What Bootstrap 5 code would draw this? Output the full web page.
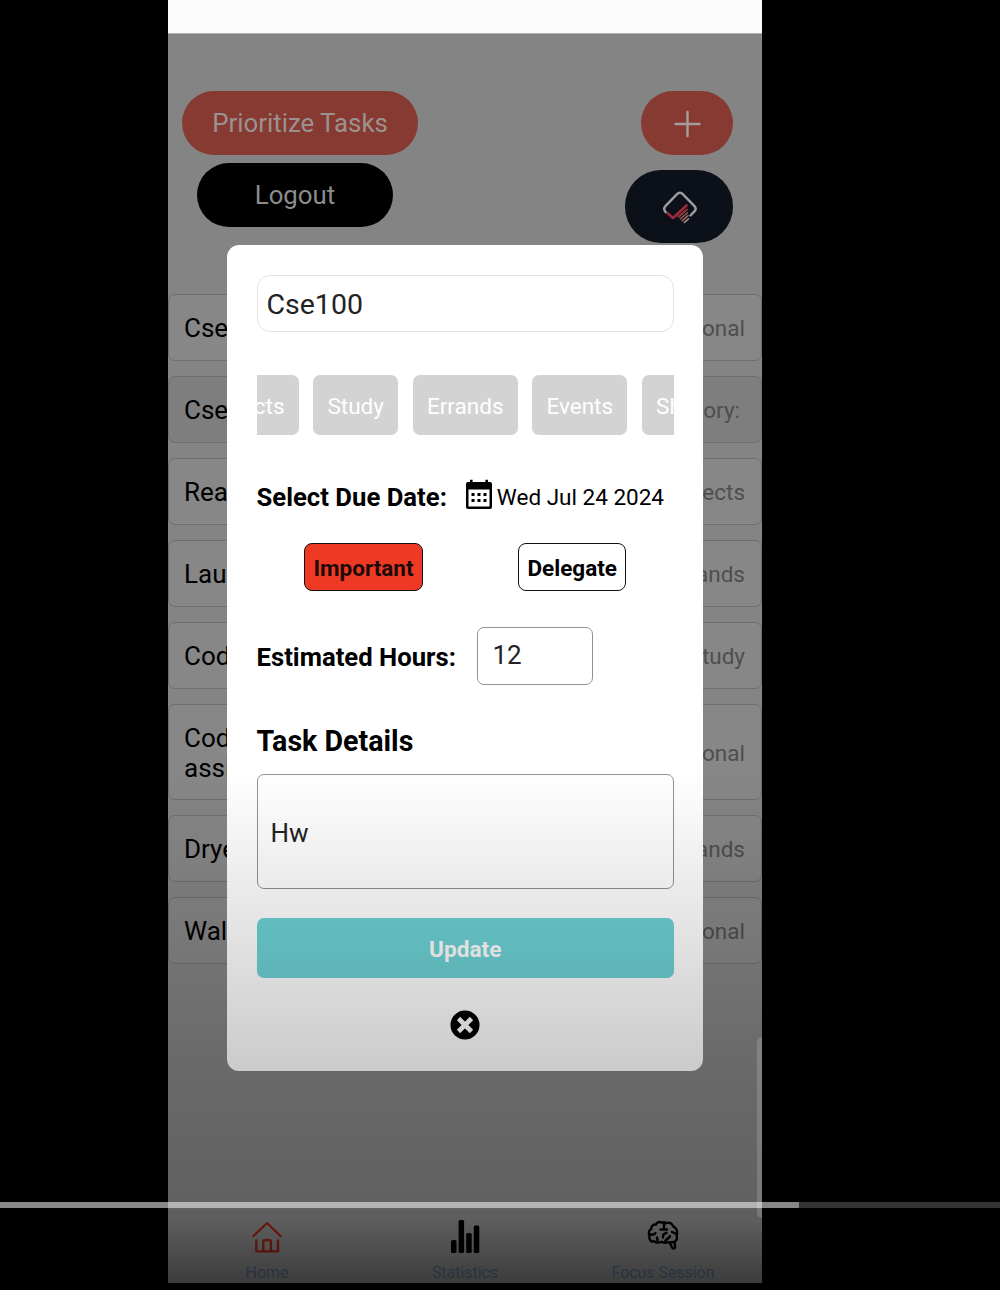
<!DOCTYPE html>
<html lang="en">
<head>
<meta charset="utf-8">
<meta name="viewport" content="width=device-width, initial-scale=1">
<title>Tasks</title>
<link rel="stylesheet" href="https://cdn.jsdelivr.net/npm/bootstrap@5.3.0/dist/css/bootstrap.min.css">
<style>
body{background:#000;font-family:Roboto,"Liberation Sans",sans-serif;color:#000;height:1290px;overflow:hidden}
.phone{width:594px;height:1283px;margin-left:168px;background:#848484;overflow:hidden}
.statusbar{height:34px;background:#fcfcfc;border-bottom:1px solid #b4b4b4}
.topbar{height:260px;padding:57px 29px 0 14px}
.pill{border-radius:36px;border:0;padding:2px 0 0;color:#9a9290;font-size:25.8px;line-height:1;height:64px;display:flex;align-items:center;justify-content:center}
.pill-red{background:#873a32}
.pill-prio{width:236px}
.pill-out{width:196px;background:#000;color:#8c8c8c;margin:8px 0 0 15px}
.pill-plus{width:92px}
.pill-logo{width:108px;height:73px;background:#0c1019;margin-top:15px}
.task{min-height:67px;border:1.5px solid #6e6e6e;border-radius:7px;background:#878787;padding:2px 16px 0 15px;margin-bottom:15px;font-size:26px;line-height:30.5px}
.task-alt{background:#7e7e7e}
.task-tall{min-height:96px}
.task .kind{font-size:22.5px;color:#4e4e4e}
.task .kind-wide{padding-right:5px}
.tabs{height:71px;background:#828282;border-top:1px solid #7a7a7a}
.tabs .tab{width:198px;font-size:15.9px;line-height:18px;color:#53647f;padding-top:6px}
.tabs svg{margin-bottom:9px}
.dialog-box{left:227px;top:245px;width:476px;height:826px;border-radius:12px;background:#fff;padding:30px 29px 0 29.5px;z-index:2}
.title-field{height:57px;border:1.5px solid #e2e2e2;border-radius:13px;font-size:28.5px;padding:3px 9px 0;color:#222}
.chips{height:60px;margin-top:43px;gap:14.4px}
.chip{background:#d3d3d3;color:#fff;border-radius:7px;font-size:22.5px;height:60px;padding:3px 14.3px 0}
.chip:first-child{margin-left:-68.8px}
.lbl{font-size:25.7px;font-weight:700;padding-top:2px}
.date-row{height:32px;margin-top:44px;font-size:22.5px}
.date-row .lbl{padding-top:4px}
.date-row .day{margin:0 10px 0 4px;padding-top:6px}
.flags{height:84px;margin-top:32px}
.flag{height:48px;border:1.5px solid #111;border-radius:8px;font-size:22.5px;font-weight:700;padding:3px 8px 0}
.flag-on{background:#ee3a25;color:#1d0a08}
.hours{width:116px;height:58px;border:1.5px solid #929292;border-radius:7px;font-size:26px;padding-left:14px;color:#222;margin-left:21.5px;padding-bottom:2px}
.details-title{font-size:28.6px;font-weight:700;line-height:34px;margin:39px 0 16px}
.details{height:115px;border:1.5px solid #929292;border-radius:7px;font-size:26px;padding:3px 0 0 13px;color:#222}
.update{height:60px;margin-top:29px;background:#6dd2d5;border-radius:7px;color:#fff;font-size:22.6px;font-weight:700;padding-top:3px}
.shade{left:168px;top:770px;width:594px;height:513px;z-index:3;pointer-events:none;background:linear-gradient(rgba(0,0,0,0),rgba(0,0,0,.08) 115px,rgba(0,0,0,.14) 208px,rgba(0,0,0,.205) 300px,rgba(0,0,0,.265) 430px,rgba(0,0,0,.28) 450px,rgba(0,0,0,.54) 513px)}
.thumb{left:757px;top:1037px;width:5px;height:181px;border-radius:5px 0 0 5px;background:rgba(255,255,255,.16);z-index:4}
.seek{left:0;top:1202px;width:1000px;height:6px;background:rgba(255,255,255,.2);z-index:5}
.seek-done{width:799px;height:6px;background:rgba(255,255,255,.41)}
</style>
<script src="https://cdn.jsdelivr.net/npm/bootstrap@5.3.0/dist/js/bootstrap.bundle.min.js"></script>
</head>
<body class="position-relative">
<main class="phone d-flex flex-column">
  <div class="statusbar flex-shrink-0"></div>
  <header class="topbar d-flex justify-content-between align-items-start flex-shrink-0">
    <div>
      <button class="pill pill-red pill-prio">Prioritize Tasks</button>
      <button class="pill pill-out">Logout</button>
    </div>
    <div class="d-flex flex-column align-items-end">
      <button class="pill pill-red pill-plus" aria-label="Add"><svg width="28" height="28" viewBox="0 0 28 28" stroke="#a59d9b" stroke-width="2.4" stroke-linecap="round"><path d="M14.500 2v24M2.500 14h24"/></svg></button>
      <button class="pill pill-logo" aria-label="Focus"><svg width="36" height="36" viewBox="0 0 36 36" fill="none" stroke-linecap="round" stroke-linejoin="round"><g stroke="#9b9da1" stroke-width="2.4"><path d="M4.800 22.300C2.300 19.500 2.600 17.800 4.600 15.800L15.800 4.300c2-2 4.200-2 6.200 0L33.200 15.800c2 2 2 3.800 0 5.800L29.500 25.500"/></g><path d="M7 23.500l5 4.500L25.500 15.500" stroke="#a02a38" stroke-width="2.600"/><path d="M17.500 26.800L26 19.500" stroke="#923b3b" stroke-width="1.900"/><path d="M19.300 28.800l7-6" stroke="#8d4f48" stroke-width="1.700"/><path d="M21.300 30.600l5.700-4.900" stroke="#95665f" stroke-width="1.700"/><path d="M23.500 32.400l4-3.500" stroke="#a08883" stroke-width="1.700"/></svg></button>
    </div>
  </header>
  <section class="flex-grow-1">
    <div class="task d-flex align-items-center justify-content-between"><span>Cse100</span><span class="kind">Personal</span></div>
    <div class="task task-alt d-flex align-items-center justify-content-between"><span>Cse100</span><span class="kind kind-wide">Category:</span></div>
    <div class="task d-flex align-items-center justify-content-between"><span>Read</span><span class="kind">Projects</span></div>
    <div class="task d-flex align-items-center justify-content-between"><span>Laundry</span><span class="kind">Errands</span></div>
    <div class="task d-flex align-items-center justify-content-between"><span>Code</span><span class="kind">Study</span></div>
    <div class="task task-tall d-flex align-items-center justify-content-between"><span>Code<br>assignment</span><span class="kind">Personal</span></div>
    <div class="task d-flex align-items-center justify-content-between"><span>Dryer</span><span class="kind">Errands</span></div>
    <div class="task d-flex align-items-center justify-content-between"><span>Walk</span><span class="kind">Personal</span></div>
  </section>
  <nav class="tabs d-flex flex-shrink-0">
    <div class="tab d-flex flex-column align-items-center"><svg width="36" height="36" viewBox="0 0 36 36" fill="none" stroke="#951f14" stroke-width="2.300" stroke-linecap="round" stroke-linejoin="round"><path d="M4.500 17L18 4l13.500 13M7.300 21.500V32.300H29V21.500M14.300 32V22.300q0-1.200 1.200-1.200h5.200q1.200 0 1.200 1.200V32"/></svg><span>Home</span></div>
    <div class="tab d-flex flex-column align-items-center"><svg width="36" height="36" viewBox="0 0 36 36"><rect x="4" y="21" width="5.500" height="13" rx="1.500"/><rect x="11.600" y="1" width="5.500" height="33" rx="1.500"/><rect x="19.200" y="14" width="5.500" height="20" rx="1.500"/><rect x="26.800" y="6.500" width="5.500" height="27.500" rx="1.500"/></svg><span>Statistics</span></div>
    <div class="tab d-flex flex-column align-items-center"><svg width="36" height="36" viewBox="0 0 36 36" fill="none" stroke="#000" stroke-width="2.400" stroke-linecap="round" stroke-linejoin="round"><path d="M17.500 3.800c-3-1.500-6-.5-6.600 1.800C8 5.300 6 7.500 6.300 9.700 3.700 11.300 3.300 14.500 4.500 17c-.8 3.800 1.500 6 4.500 5.300 2.500 1.700 5 1.700 7.500.4 2.500 1.300 4.700 1.300 6.500.3l2 1 2.200 4.700c.8 1.300 2.800.9 3-.8l-.7-4.900c2.300-1.700 3-3.500 2.200-6 1-3.500.5-8-3.500-9.700C26.500 3.800 23.500 2.800 21 4.300c-1-1-2.500-1.300-3.500-.5z"/><path d="M19 5.500v5M15.500 10.500H22M5 15.500h4l1.500-1.500M12.500 21.500l-.5-3M18 18.500l.3-3 3.200-1.700M20 22.500c1.500-3.500 3.500-2 5-5.500M31.500 15l-4.500-2M25 23.500l4-.5"/></svg><span>Focus Session</span></div>
  </nav>
</main>

<div class="dialog-box position-absolute" role="dialog">
  <div class="title-field d-flex align-items-center">Cse100</div>
  <div class="chips d-flex overflow-hidden">
    <div class="chip d-flex align-items-center flex-shrink-0">Projects</div>
    <div class="chip d-flex align-items-center flex-shrink-0">Study</div>
    <div class="chip d-flex align-items-center flex-shrink-0">Errands</div>
    <div class="chip d-flex align-items-center flex-shrink-0">Events</div>
    <div class="chip d-flex align-items-center flex-shrink-0">Shopping</div>
  </div>
  <div class="date-row d-flex align-items-center text-nowrap">
    <span class="lbl">Select Due Date:</span>
    <svg class="flex-shrink-0 ms-auto" width="28" height="32" viewBox="0 0 28 32"><path d="M5 3V.8h2.600V3h12.800V.8H23V3h2q2 0 2 2v23q0 2-2 2H3q-2 0-2-2V5q0-2 2-2z"/><path fill="#fff" d="M3.500 10.500h21v17h-21z"/><path d="M6.500 14h3v3h-3zm6 0h3v3h-3zm6 0h3v3h-3zM6.500 20h3v3h-3zm6 0h3v3h-3zm6 0h3v3h-3z"/></svg>
    <span class="day">Wed Jul 24 2024</span>
  </div>
  <div class="flags d-flex justify-content-around align-items-start">
    <div class="flag flag-on d-flex align-items-center">Important</div>
    <div class="flag d-flex align-items-center">Delegate</div>
  </div>
  <div class="d-flex align-items-center">
    <span class="lbl">Estimated Hours:</span>
    <div class="hours d-flex align-items-center">12</div>
  </div>
  <div class="details-title">Task Details</div>
  <div class="details d-flex align-items-center">Hw</div>
  <div class="update d-flex align-items-center justify-content-center">Update</div>
  <div class="d-flex justify-content-center pt-4"><svg class="mt-2" width="30" height="30" viewBox="0 0 30 30"><circle cx="15" cy="15" r="14.500"/><path d="M8.500 8.500l13 13M21.500 8.500l-13 13" stroke="#fff" stroke-width="4.600"/></svg></div>
</div>
<div class="shade position-absolute"></div>
<div class="thumb position-absolute"></div>
<div class="seek position-absolute"><div class="seek-done"></div></div>
</body>
</html>
